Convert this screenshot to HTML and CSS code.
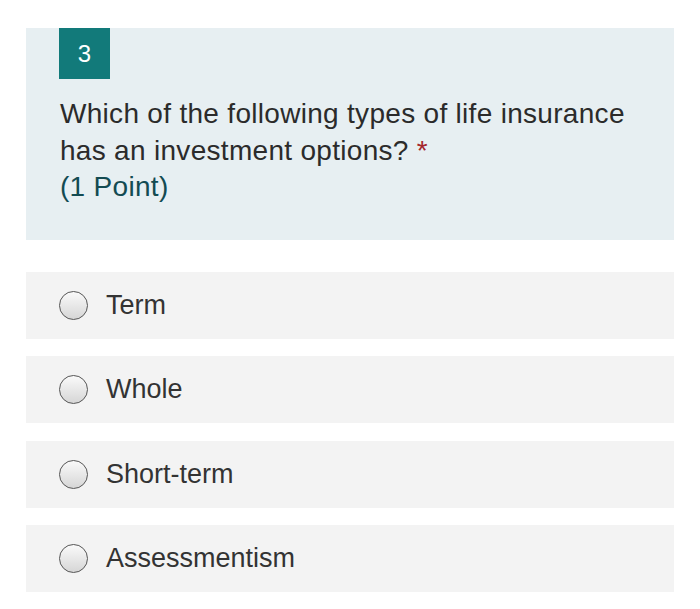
FILE: index.html
```html
<!DOCTYPE html>
<html>
<head>
<meta charset="utf-8">
<link rel="stylesheet" href="styles.css">
</head>
<body>
<div class="page">
  <div class="question">
    <div class="badge">3</div>
    <div class="qtext">Which of the following types of life insurance has an investment options? <span class="req">*</span></div>
    <div class="points">(1 Point)</div>
  </div>
  <div class="options">
    <div class="option"><span class="radio"></span><span class="label">Term</span></div>
    <div class="option"><span class="radio"></span><span class="label">Whole</span></div>
    <div class="option"><span class="radio"></span><span class="label">Short-term</span></div>
    <div class="option"><span class="radio"></span><span class="label">Assessmentism</span></div>
  </div>
</div>
</body>
</html>
```
FILE: styles.css
```css
html, body {
  margin: 0;
  padding: 0;
  background: #fff;
}
body {
  font-family: "Liberation Sans", Arial, sans-serif;
  color: #333;
}
.page {
  padding: 28px 26px 0 26px;
}
.question {
  background: #e7eff2;
  padding: 0 34px 0 33px;
  height: 212px;
  box-sizing: border-box;
}
.badge {
  width: 51px;
  height: 51px;
  background: #127a7a;
  color: #fff;
  font-size: 24px;
  display: flex;
  align-items: center;
  justify-content: center;
}
.qtext {
  margin-top: 17px;
  font-size: 28px;
  line-height: 36.6px;
  letter-spacing: 0.3px;
  color: #2b2b2b;
  padding-left: 1px;
}
.req {
  color: #a4262c;
}
.points {
  font-size: 28px;
  line-height: 36.6px;
  letter-spacing: 0.3px;
  color: #134b52;
  padding-left: 1px;
}
.options {
  display: flex;
  flex-direction: column;
  gap: 17.33px;
  margin-top: 32px;
}
.option {
  background: #f3f3f3;
  height: 67px;
  display: flex;
  align-items: center;
  padding-left: 33px;
}
.radio {
  width: 27px;
  height: 27px;
  border: 1.5px solid #555;
  border-radius: 50%;
  background: linear-gradient(#fafafa, #d6d6d6);
  flex: none;
}
.label {
  margin-left: 18px;
  font-size: 27px;
  color: #333;
}
```
